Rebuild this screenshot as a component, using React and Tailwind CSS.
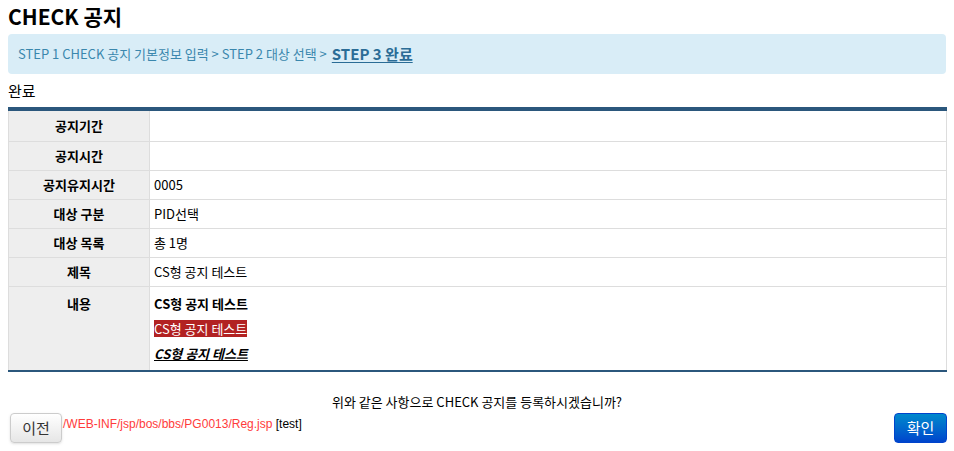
import React from "react";

const rows = [
  { label: "공지기간", value: "" },
  { label: "공지시간", value: "" },
  { label: "공지유지시간", value: "0005" },
  { label: "대상 구분", value: "PID선택" },
  { label: "대상 목록", value: "총 1명" },
  { label: "제목", value: "CS형 공지 테스트" },
];

const App = () => {
  return (
    <div className="w-[954px] h-[451px] bg-white px-2 text-[#222] font-['Noto_Sans_CJK_KR',sans-serif] overflow-hidden">
      <h1 className="pt-[3px] text-[21px] font-bold leading-[26px] text-black">CHECK 공지</h1>

      <div className="mt-[5px] h-[40px] rounded-[4px] bg-[#d9edf7] px-[10px] flex items-center gap-[5px] text-[13px] text-[#3a87ad]">
        <span>STEP 1 CHECK 공지 기본정보 입력 &gt; STEP 2 대상 선택 &gt;</span>
        <span className="text-[15px] font-bold underline underline-offset-2 text-[#2a6c96]">STEP 3 완료</span>
      </div>

      <div className="mt-[7px] text-[15px] leading-[20px] text-black">완료</div>

      <div className="mt-[6px] w-[939px] border-t-4 border-t-[#2b577c] border-b-2 border-b-[#2b577c]">
        <table className="w-full border-collapse text-[13px]">
          <tbody>
            {rows.map((row, i) => (
              <tr key={row.label} className={i === 0 ? "h-[30px]" : "h-[29px]"}>
                <td className="w-[141px] border border-[#dddddd] border-t-0 bg-[#eeeeee] text-center font-bold text-black">
                  {row.label}
                </td>
                <td className="border border-[#dddddd] border-t-0 pl-[4px] text-black">{row.value}</td>
              </tr>
            ))}
            <tr className="h-[84px]">
              <td className="w-[141px] border-l border-[#dddddd] bg-[#eeeeee] text-center align-top pt-[7px] font-bold text-black">
                내용
              </td>
              <td className="border-r border-l border-[#dddddd] pl-[4px] align-top pt-[7px] text-black">
                <div className="flex flex-col items-start gap-[7px]">
                  <span className="font-bold leading-[19px]">CS형 공지 테스트</span>
                  <span className="bg-[#b22222] text-white leading-[17px]">CS형 공지 테스트</span>
                  <span className="font-bold italic underline leading-[19px]">CS형 공지 테스트</span>
                </div>
              </td>
            </tr>
          </tbody>
        </table>
      </div>

      <p className="mt-[21px] text-center text-[13px] leading-[18px] text-black">
        위와 같은 사항으로 CHECK 공지를 등록하시겠습니까?
      </p>

      <div className="mt-[2px] flex items-start justify-between">
        <div className="flex items-center">
          <button className="ml-[2px] h-[30px] w-[52px] rounded-[4px] border border-[#cccccc] bg-gradient-to-b from-white to-[#e6e6e6] text-[15px] text-[#333] shadow-sm">
            이전
          </button>
          <span className="ml-[1px] -mt-[8px] text-[12px] text-[#ff3b3b] font-['Liberation_Sans',sans-serif]">
            /WEB-INF/jsp/bos/bbs/PG0013/Reg.jsp
            <span className="text-black"> [test]</span>
          </span>
        </div>
        <button className="mr-[-1px] h-[30px] w-[53px] rounded-[4px] border border-[#0044cc] bg-gradient-to-b from-[#0088cc] to-[#0044cc] text-[15px] text-white">
          확인
        </button>
      </div>
    </div>
  );
};

export default App;
